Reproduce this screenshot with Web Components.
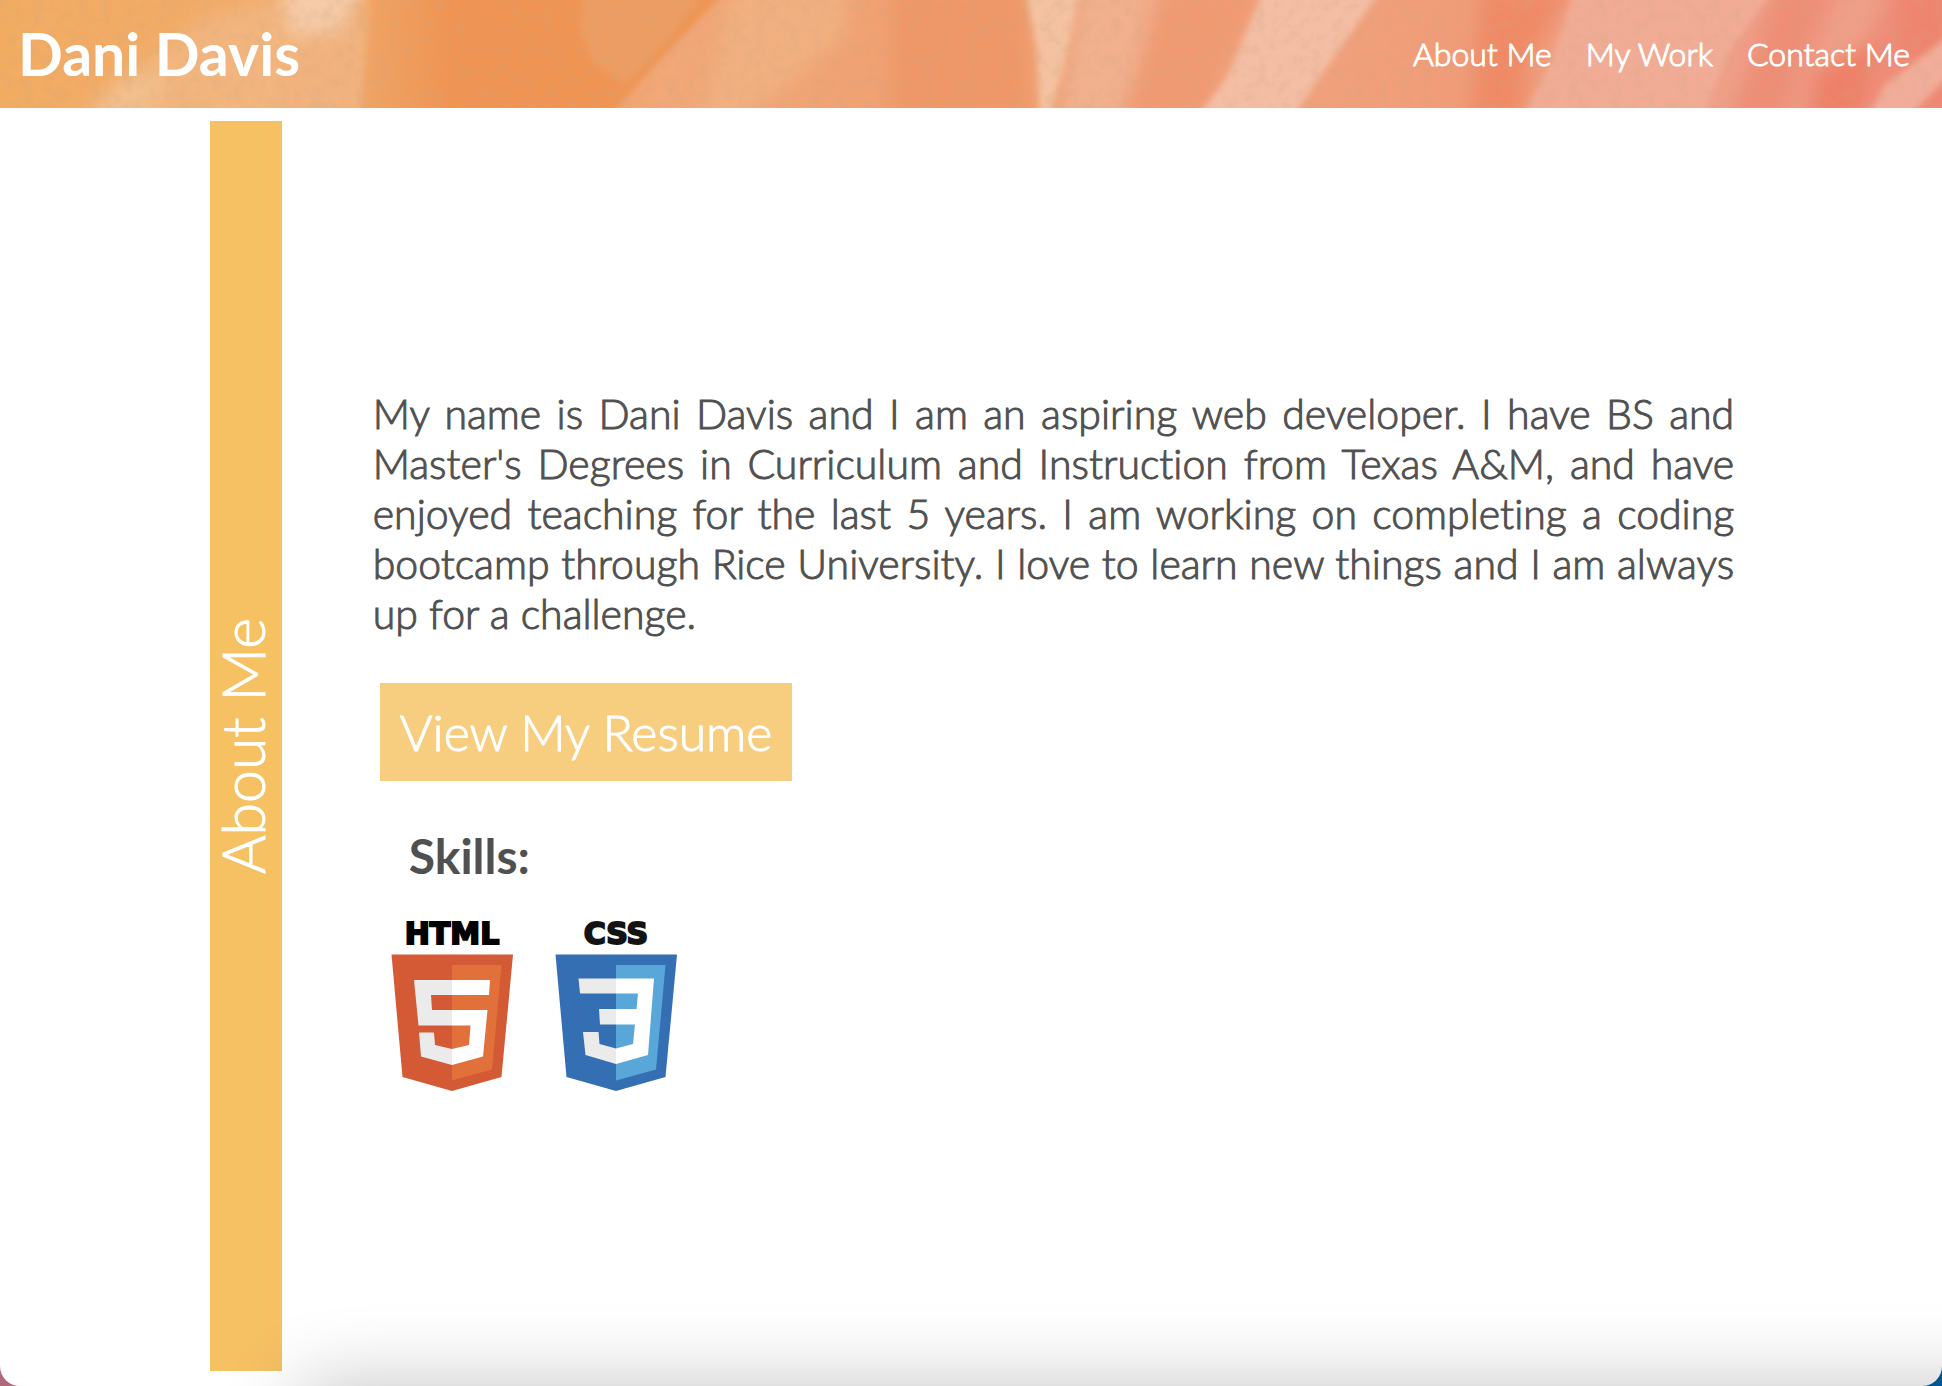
<!DOCTYPE html>
<html lang="en">
<head>
<meta charset="utf-8">
<meta name="viewport" content="width=device-width, initial-scale=1">
<title>Dani Davis</title>
<style>
  html { background: linear-gradient(90deg, #b0687a 50%, #00578f 50%); }
  body { margin: 0; font-family: Lato, "Open Sans", sans-serif; font-weight: 300; font-variant-ligatures: none; color: #505050; }
</style>
</head>
<body>
<page-shell>
  <site-header slot="header" name="Dani Davis">
    <nav-link href="#about">About Me</nav-link>
    <nav-link href="#work">My Work</nav-link>
    <nav-link href="#contact">Contact Me</nav-link>
  </site-header>
  <page-section id="about" heading="About Me">
    <bio-text>My name is Dani Davis and I am an aspiring web developer. I have BS and Master's Degrees in Curriculum and Instruction from Texas A&amp;M, and have enjoyed teaching for the last 5 years. I am working on completing a coding bootcamp through Rice University. I love to learn new things and I am always up for a challenge.</bio-text>
    <resume-button>View My Resume</resume-button>
    <skill-list heading="Skills:">
      <html-logo></html-logo>
      <css-logo></css-logo>
    </skill-list>
  </page-section>
</page-shell>

<script>
const define = (name, render) => customElements.define(name, class extends HTMLElement {
  connectedCallback() {
    if (!this.shadowRoot) this.attachShadow({ mode: 'open' }).innerHTML = render(this);
  }
});

define('page-shell', () => `
  <style>
    :host { display: flex; flex-direction: column; position: relative; min-height: 100vh; overflow: hidden; background: #fff; border-radius: 0 0 20px 20px; }
    main { flex: 1; display: flex; flex-direction: column; padding: 13px 0 15px; }
    .shade { position: absolute; left: 300px; right: -100px; top: 100%; height: 100px; box-shadow: 0 0 80px rgba(0, 0, 0, .24); pointer-events: none; }
  </style>
  <slot name="header"></slot>
  <main><slot></slot></main>
  <div class="shade"></div>`);

define('site-header', el => `
  <style>
    :host { display: flex; align-items: center; justify-content: space-between; position: relative; height: 108px; padding: 0 32px 0 18px; box-sizing: border-box; color: #fff; background: #f2a877; overflow: hidden; }
    svg { position: absolute; inset: 0; width: 100%; height: 100%; }
    h1 { position: relative; margin: 0; font-size: 59px; line-height: 72px; font-weight: 700; }
    nav { position: relative; display: flex; gap: 34px; }
  </style>
  <svg viewBox="0 0 1942 108" preserveAspectRatio="none" aria-hidden="true">
    <defs>
      <filter id="soft" x="-10%" y="-30%" width="120%" height="160%"><feGaussianBlur stdDeviation="9"/></filter>
      <filter id="edge" x="-10%" y="-30%" width="120%" height="160%"><feGaussianBlur stdDeviation="3"/></filter>
      <filter id="grain" x="0" y="0" width="100%" height="100%">
        <feTurbulence type="fractalNoise" baseFrequency=".09" numOctaves="3" seed="4"/>
        <feColorMatrix values="0 0 0 0 .6  0 0 0 0 .38  0 0 0 0 .22  1.6 0 0 0 -.66"/>
      </filter>
      <linearGradient id="wash">
        <stop offset="0" stop-color="#f2ac62"/><stop offset=".17" stop-color="#f2ab6a"/>
        <stop offset=".25" stop-color="#f09655"/><stop offset=".34" stop-color="#f2a878"/>
        <stop offset=".5" stop-color="#f19f70"/><stop offset=".6" stop-color="#f2a680"/>
        <stop offset=".75" stop-color="#f19c78"/><stop offset=".88" stop-color="#f1a08a"/>
        <stop offset="1" stop-color="#ef8774"/>
      </linearGradient>
      <linearGradient id="orange" gradientUnits="userSpaceOnUse" x1="360" y1="0" x2="450" y2="0">
        <stop offset="0" stop-color="#f1a566"/><stop offset="1" stop-color="#f09452"/>
      </linearGradient>
    </defs>
    <rect width="1942" height="108" fill="url(#wash)"/>
    <g filter="url(#soft)">
      <path d="M70 120 200 20 300-10 370-10 280 120Z" fill="#f3b57e"/>
      <path d="M95 120 115 80 170 70 140 120Z" fill="#f3c08e"/>
      <path d="M270 120 300 50 375 10V120Z" fill="#f2b27e"/>
      <path d="M282-20H370L340 30 290 35Z" fill="#f5cba8"/>
      <path d="M890-10H1025L1030 120H890Z" fill="#f09768"/>
      <path d="M1080-10H1150L1130 120H1060Z" fill="#f2b08e"/>
      <path d="M1165-10H1262L1200 120H1120Z" fill="#f19a72"/>
      <path d="M1480-10H1570L1530 60 1520 120H1470Z" fill="#f08a66"/>
    </g>
    <g filter="url(#edge)">
      <path d="M372-10H727L660 60 606 120H360Z" fill="url(#orange)"/>
      <path d="M585-10H665L700 0 650 60 625 85 592 60 580 25Z" fill="#ee9d62"/>
      <path d="M1025-10H1080L1065 60 1050 115 1040 115 1037 50Z" fill="#f4c2a0"/>
      <path d="M1264-10H1382L1335 55 1290 120H1196L1228 75Z" fill="#f4bea4"/>
      <path d="M1575-10H1775L1730 50 1700 120H1521L1550 65Z" fill="#f2ac96"/>
    </g>
    <g filter="url(#soft)">
      <path d="M735-10H850L840 40 740 120H700Z" fill="#f2b080"/>
      <path d="M1780-10H1830L1800 60 1780 120H1730Z" fill="#ef8d76"/>
      <path d="M1820 60 1880 40 1860 120H1810Z" fill="#ef8068"/>
      <path d="M1840-10H1890L1860 50 1810 70Z" fill="#f19f88"/>
      <path d="M1900-10H1960V50L1900 60Z" fill="#ef846e"/>
    </g>
    <path filter="url(#edge)" d="M1866 120 1885 85 1950 35V75L1905 120Z" fill="#f2ad9a"/>
    <rect width="1942" height="108" filter="url(#grain)" opacity=".35"/>
  </svg>
  <h1>${el.getAttribute('name')}</h1>
  <nav><slot></slot></nav>`);

define('nav-link', el => `
  <style>
    :host { display: block; }
    a { color: inherit; text-decoration: none; font-size: 32px; line-height: 40px; -webkit-text-stroke: 1px; }
  </style>
  <a href="${el.getAttribute('href')}"><slot></slot></a>`);

define('page-section', el => `
  <style>
    :host { flex: 1; display: flex; gap: 91px; padding: 0 10.7% 0 10.8%; }
    h2 { flex: none; width: 72px; margin: 0; display: flex; justify-content: center; align-items: center; box-sizing: border-box; padding-left: 6px; background: #f5c163; color: #fff; font-size: 59px; line-height: 66px; font-weight: 300; -webkit-text-stroke: 1px; writing-mode: vertical-rl; transform: rotate(180deg); }
    .content { flex: 1; min-width: 0; display: flex; flex-direction: column; align-items: flex-start; justify-content: center; padding-bottom: 12px; }
  </style>
  <h2>${el.getAttribute('heading')}</h2>
  <div class="content"><slot></slot></div>`);

define('bio-text', () => `
  <style>
    :host { display: block; }
    p { margin: 0; font-size: 41px; line-height: 50px; text-align: justify; -webkit-text-stroke: 1px; }
  </style>
  <p><slot></slot></p>`);

define('resume-button', () => `
  <style>
    :host { display: block; margin: 44px 0 0 7px; }
    button { display: block; border: 0; padding: 16px 20px; background: #f7ce80; color: #fff; font: inherit; font-size: 50px; line-height: 66px; -webkit-text-stroke: 1px; cursor: pointer; }
  </style>
  <button type="button"><slot></slot></button>`);

define('skill-list', el => `
  <style>
    :host { display: block; margin: 42px 0 0 15px; }
    h3 { margin: 0 0 22px 21px; font-size: 48px; line-height: 66px; font-weight: 700; }
    div { display: flex; gap: 36px; }
  </style>
  <h3>${el.getAttribute('heading')}</h3>
  <div><slot></slot></div>`);

const logoStyle = `
  <style>
    :host { display: block; }
    svg { display: block; width: 128px; height: 180px; }
    text { font: bold 30px "DejaVu Sans", sans-serif; text-anchor: middle; stroke-width: 2; }
  </style>`;

define('html-logo', () => logoStyle + `
  <svg viewBox="388 911 128 180" role="img" aria-label="HTML5">
    <text x="452" y="944" stroke="#000">HTML</text>
    <path fill="#d35a35" d="M391.500 954.500H513L501.500 1077 452 1091 402.500 1077Z"/>
    <path fill="#e1703a" d="M452 965H501.500L492 1069.500 452 1080.500Z"/>
    <path fill="#ebebeb" d="M414 980H452V995H431L432 1010H452V1025.500H418.500ZM419 1032.500H434L435 1045 452 1049V1065L421 1056.500Z"/>
    <path fill="#fff" d="M452 980H490L489 995H452ZM452 1010H487.500L483 1056.500 452 1065V1049L469 1045 470.500 1025.500H452Z"/>
  </svg>`);

define('css-logo', () => logoStyle + `
  <svg viewBox="552 911 128 180" role="img" aria-label="CSS3">
    <text x="616" y="944" fill="#131313" stroke="#131313">CSS</text>
    <path fill="#356fb3" d="M555.500 954.500H677L665.500 1077 616 1091 566.500 1077Z"/>
    <path fill="#59a7d8" d="M616 965H665.500L656 1069.500 616 1080.500Z"/>
    <path fill="#ebebeb" d="M578.500 978.500H616V993.500H580ZM599 1009H616V1024.500H600ZM583 1032H598.500L599.500 1044 616 1048.500V1064L585.500 1055Z"/>
    <path fill="#fff" d="M616 978.500H654L648 1055 616 1064V1048.500L633 1044 635 1024.500H616V1009H636.500L638 993.500H616Z"/>
  </svg>`);
</script>
</body>
</html>
